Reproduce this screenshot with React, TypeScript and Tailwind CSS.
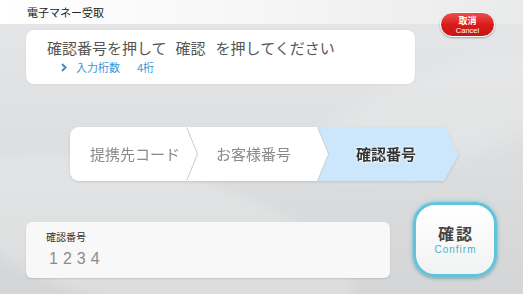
import React from 'react';

const jp = "font-['Noto_Sans_CJK_JP','Noto_Sans',sans-serif]";

const steps = [
  { label: '提携先コード', w: 'w-[127px]', ml: '', pl: 'pl-[20px]', clip: 'polygon(0 0,116px 0,127px 50%,116px 100%,0 100%)', active: false, first: true },
  { label: 'お客様番号', w: 'w-[141px]', ml: 'ml-[-10px]', pl: 'pl-[29px]', clip: 'polygon(0 0,130px 0,141px 50%,130px 100%,0 100%,11px 50%)', active: false, first: false },
  { label: '確認番号', w: 'w-[141px]', ml: 'ml-[-10px]', pl: 'pl-[38px]', clip: 'polygon(0 0,126px 0,141px 50%,126px 100%,0 100%,11px 50%)', active: true, first: false },
];

export default function App() {
  return (
    <div className={`relative w-[523px] h-[294px] overflow-hidden bg-gradient-to-b from-[#e6e7e8] via-[#dcdedf] to-[#d3d5d6] ${jp}`}>
      {/* soft background swooshes */}
      <div className="absolute left-[-60px] top-[170px] w-[420px] h-[140px] rotate-[14deg] bg-white/20 rounded-[50%] blur-[6px]" />
      <div className="absolute left-[300px] top-[70px] w-[300px] h-[90px] rotate-[-18deg] bg-white/15 rounded-[50%] blur-[8px]" />

      <div className="relative flex flex-col">
        <div className="h-[24px] flex items-center pl-[27px] bg-gradient-to-r from-white via-[#f6f6f6] to-[#e9eaea]">
          <span className="text-[11px] text-[#222]">電子マネー受取</span>
        </div>

        <div className="ml-[26px] mt-[6px] w-[389px] h-[54px] rounded-[8px] bg-white pl-[21px] pt-[7px] shadow-[0_0_2px_rgba(0,0,0,0.08)]">
          <div className="flex text-[15px] leading-[21px] text-[#555] whitespace-nowrap">
            <span>確認番号を押して</span>
            <span className="ml-[9px]">確認</span>
            <span className="ml-[10px]">を押してください</span>
          </div>
          <div className="flex items-center mt-[2px] text-[11px] leading-[14px] text-[#3f93d1]">
            <svg width="6" height="9" viewBox="0 0 6 9" className="ml-[14px] mr-[9px]">
              <path d="M1 1 L4.5 4.5 L1 8" stroke="#3a8fd0" strokeWidth="2" fill="none" />
            </svg>
            <span>入力桁数</span>
            <span className="ml-[17px]">4桁</span>
          </div>
        </div>

        <div className="ml-[70px] mt-[43px] flex h-[54px] drop-shadow-[0_1px_1px_rgba(0,0,0,0.12)]">
          {steps.map((s) => (
            <div
              key={s.label}
              style={{ clipPath: s.clip }}
              className={`${s.w} ${s.ml} ${s.pl} h-full flex items-center text-[15px] whitespace-nowrap ${
                s.first ? 'rounded-l-[9px]' : ''
              } ${s.active ? 'bg-[#cce7fb] text-[#333] font-bold [text-shadow:0_0_3px_#fff,0_0_2px_#fff]' : 'bg-white text-[#8a8a8a]'}`}
            >
              {s.label}
            </div>
          ))}
        </div>

        <div className="mt-[21px] flex items-start">
          <div className="ml-[26px] mt-[20px] w-[364px] h-[56px] rounded-[6px] bg-[#f8f8f8] shadow-[0_1px_2px_rgba(0,0,0,0.12)] pl-[20px] pt-[9px]">
            <div className="text-[10px] leading-[12px] text-[#333]">確認番号</div>
            <div className="mt-[6px] ml-[3px] text-[16px] leading-[20px] tracking-[5px] text-[#8c8c8c] font-['Liberation_Sans',sans-serif] font-light">
              1234
            </div>
          </div>

          <button className="ml-[23px] w-[84px] h-[75px] rounded-[22px] border-[3px] border-[#63c3da] bg-gradient-to-b from-white to-[#f1f2f2] shadow-[0_0_4px_rgba(99,195,218,0.8),0_2px_3px_rgba(0,0,0,0.2)] flex flex-col items-center justify-center">
            <span className="text-[16px] leading-[20px] font-bold tracking-[2px] pl-[2px] text-[#444]">確認</span>
            <span className="text-[10px] leading-[12px] mt-[1px] tracking-[1px] pl-[1px] text-[#4bb3c9] font-['Liberation_Sans',sans-serif]">Confirm</span>
          </button>
        </div>
      </div>

      <button className="absolute left-[440px] top-[12px] w-[55px] h-[25px] rounded-full border border-white bg-gradient-to-b from-[#ec4b4b] via-[#d91c1c] to-[#c81414] shadow-[0_1px_2px_rgba(0,0,0,0.3)] flex flex-col items-center justify-center">
        <span className="text-[9px] leading-[11px] font-bold text-white">取消</span>
        <span className="text-[7.5px] leading-[9px] text-white font-['Liberation_Sans',sans-serif]">Cancel</span>
      </button>
    </div>
  );
}
